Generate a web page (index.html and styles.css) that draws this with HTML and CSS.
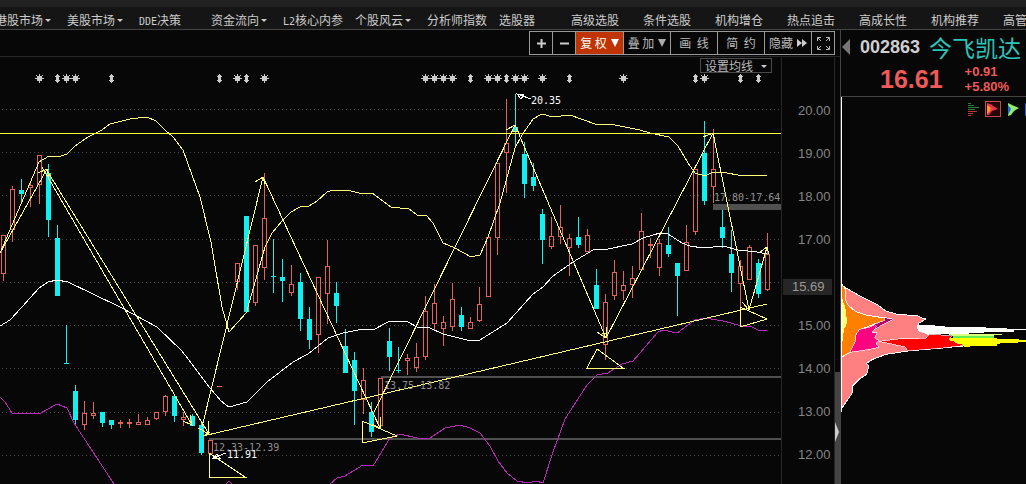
FILE: index.html
```html
<!DOCTYPE html>
<html lang="zh-CN">
<head>
<meta charset="utf-8">
<title>今飞凯达 002863</title>
<link rel="stylesheet" href="styles.css">
</head>
<body>
<div class="page">
  <div class="strip"></div>
  <nav class="menu">
    <a href="#" class="drop">港股市场</a>
    <a href="#" class="drop">美股市场</a>
    <a href="#"><span class="latin">DDE</span>决策</a>
    <a href="#" class="drop">资金流向</a>
    <a href="#"><span class="latin">L2</span>核心内参</a>
    <a href="#" class="drop">个股风云</a>
    <a href="#">分析师指数</a>
    <a href="#">选股器</a>
    <a href="#">高级选股</a>
    <a href="#">条件选股</a>
    <a href="#">机构增仓</a>
    <a href="#">热点追击</a>
    <a href="#">高成长性</a>
    <a href="#">机构推荐</a>
    <a href="#">高管增持</a>
  </nav>
  <main class="main">
    <section class="left">
      <div class="toolbar">
        <button class="tool small" aria-label="放大"><svg width="9" height="9"><path d="M0 4.5H9M4.5 0V9" stroke="#ccc" stroke-width="2" fill="none"/></svg></button>
        <button class="tool small" aria-label="缩小"><svg width="9" height="9"><path d="M0 4.5H9" stroke="#ccc" stroke-width="2" fill="none"/></svg></button>
        <button class="tool active">复 权<svg width="8" height="8"><path d="M0 0H8L4 8Z" fill="#fff"/></svg></button>
        <button class="tool">叠 加<svg width="8" height="8"><path d="M0 0H8L4 8Z" fill="#aaa"/></svg></button>
        <button class="tool">画&nbsp; 线</button>
        <button class="tool">简&nbsp; 约</button>
        <button class="tool">隐藏<svg width="10" height="8"><path d="M0 0L5 4L0 8ZM5 0L10 4L5 8Z" fill="#ccc"/></svg></button>
        <button class="tool small last" aria-label="全屏"><svg width="13" height="13"><path d="M.5 4V.5H4M1 1L4 4M9 .5H12.5V4M12 1L9 4M.5 9V12.5H4M1 12L4 9M9 12.5H12.5V9M12 12L9 9" stroke="#bbb" fill="none"/></svg></button>
      </div>
      <div class="chart">
        <button class="average">设置均线<span class="caret"></span></button>
        <svg class="plot" viewBox="0 57 781 427" role="img" aria-label="K线图">
          <g id="grid"></g>
          <g class="gap">
            <rect x="209" y="438" width="572" height="2"/>
            <rect x="381" y="376" width="400" height="2"/>
            <rect x="713" y="204" width="68" height="6"/>
          </g>
          <g id="marks"></g>
          <g id="candles"></g>
          <polyline class="line yellow" points="0,253 39,162 49,156 58,157 67,154 75,146 88,137 102,130 110,124 130,119 147,117 156,121 165,130 173,137 183,150 200,197 211,242 222,307 229,332 247,312 248,307 265,247 272,233 282,221 291,212 300,207 309,206 317,201 327,192 333,190 347,190 363,194 372,193 391,207 400,208 408,208 417,215 426,215 433,223 443,243 455,248 471,257 480,255 488,237 500,203 515,148 522,135 533,119 542,114 553,117 570,115 595,124 610,124 640,130 650,133 669,137 678,146 688,163 695,173 705,176 713,172 727,173 738,175 757,175 767,176"/>
          <polyline class="line white" points="0,326 10,320 22,307 39,288 48,282 57,280 68,282 120,307 133,314 157,327 182,351 210,388 221,401 229,407 247,402 267,382 293,362 308,354 328,338 343,333 363,329 373,330 388,322 400,321 408,322 417,327 430,328 443,334 467,340 480,340 507,323 533,294 543,287 553,276 573,262 593,250 608,249 632,244 643,238 660,233 668,234 682,243 690,246 703,248 723,246 738,250 757,252 767,254"/>
          <polyline class="line magenta" points="0,397 5,402 12,413 32,413 39,414 57,404 67,408 74,423 114,484"/>
          <polyline class="line magenta" points="226,484 229,481 232,484"/>
          <polyline class="line magenta" points="330,484 337,478 345,476 363,465 373,466 390,438 400,434 417,438 430,438 445,428 460,425 470,428 480,433 490,446 498,461 507,473 517,481 528,483 536,481 543,483 553,452 565,419 587,385 597,375 608,373 622,364 633,361 658,332 663,330 677,333 695,320 705,318 723,321 742,326 750,326 758,330 767,331"/>
          <path class="line level" d="M0 133.5H781"/>
          <path class="line yellow" d="M0 253L47 169M42 167L192 425M46 169L209 434M202 427L263 177L380 428M374 412L515 125L606 338L713 133L749 310L767 247M203 436L767 304"/>
          <path class="line yellow" d="M38 173L47 169L49 178M183 421L192 425L190 415M198 428L209 434L208 421M203 436L210 432M255 182L263 177L265 184M372 424L380 428L380 417M506 130L515 125L518 131L511 131M597 332L606 338L607 327M602 333H607M703 137L713 133L715 141M742 302L749 310L752 299M760 252L767 247L769 254"/>
          <path class="line yellow" d="M209 453V477H245ZM362 421V443L397 436ZM597 349L587 368H623ZM740 307V327L767 319Z"/>
          <path class="line white" d="M517 94L531 99M517 94L524 95L521 99ZM213 458L226 453M213 458L217 454L220 458Z"/>
          <text class="price muted" x="213" y="451">12.33-12.39</text>
          <text class="price" x="227" y="458">11.91</text>
          <text class="price muted" x="384" y="389">13.75-13.82</text>
          <text class="price muted" x="714" y="201">17.80-17.64</text>
          <text class="price" x="531" y="104">20.35</text>
        </svg>
        <ul class="axis">
          <li>20.00</li><li>19.00</li><li>18.00</li><li>17.00</li>
          <li><span class="cursor">15.69</span></li>
          <li>15.00</li><li>14.00</li><li>13.00</li><li>12.00</li>
        </ul>
        <div class="rail"><div class="thumb"><svg width="4" height="20"><path d="M0 0L4 10L0 20Z" fill="#ccc"/></svg></div></div>
      </div>
    </section>
    <aside class="quote">
      <header class="head">
        <div class="title">
          <svg width="8" height="16"><path d="M8 0V16L0 8Z" fill="#777"/></svg>
          <span class="code">002863</span>
          <span class="name">今飞凯达</span>
        </div>
        <div class="values">
          <strong class="last-price">16.61</strong>
          <div class="change"><div>+0.91</div><div>+5.80%</div></div>
        </div>
      </header>
      <div class="chips">
        <div class="modes">
          <svg width="12" height="15"><path d="M1 1.5H4M1 3.5H7M1 5.5H12M1 7.5H8" stroke="#2f7a3c"/><path d="M1 9.5H10M1 11.5H6M1 13.5H4" stroke="#b8383e"/></svg>
          <svg width="16" height="16"><rect x=".5" y=".5" width="15" height="15" fill="#250508" stroke="#c24b4b"/><path d="M2 2L5 3L13 8L7 10L4 14H2Z" fill="#f03050"/><path d="M2 4L6 7L5 10L2 13Z" fill="#ff9a20"/></svg>
          <svg width="12" height="15"><path d="M1 1L5 3L12 6L7 9L4 13L1 14Z" fill="#8df060"/><path d="M1 3L4 7L1 13Z" fill="#2864e8"/></svg>
          <svg width="12" height="15"><path d="M0 1V14L8 7Z" fill="#2864e8"/></svg>
        </div>
        <svg class="distribution" viewBox="45 -489 555 1161" role="img" aria-label="筹码分布">
          <path d="M46 -489V455" stroke="#fff" stroke-width="3"/>
          <g stroke="#fff" stroke-width="3">
            <path fill="#ff8080" d="M47 55V75L60 84L100 107L155 135L180 153L210 162L275 168L285 173L300 177L278 190L274 200L278 212L310 224L305 235L410 258L245 273L180 283L140 298L122 310L128 318L122 343L100 357L80 378L78 400L47 445Z"/>
            <path fill="#ff8000" d="M47 72L57 85V115L65 135L90 155L120 165L195 177L145 192L100 210L90 225L88 245L75 277L60 283L47 292Z"/>
          </g>
          <path fill="#ffff80" d="M47 100L51 127L58 140L60 165L64 180L60 200L54 207L50 240L47 250Z"/>
          <path fill="#b0006a" stroke="#fff" stroke-width="2" d="M140 195L178 180L172 172L202 178L150 205Z"/>
          <path fill="#ff0080" stroke="#fff" stroke-width="2" d="M100 208L130 202L145 194L152 200L137 219L154 218L146 234L158 242L150 249L158 262L130 268L72 277L88 245L90 225Z"/>
          <path fill="#f00" stroke="#fff" stroke-width="2" d="M310 222L378 228L370 238L420 256L350 264L245 273L238 261L160 244L215 237L300 235Z"/>
          <path fill="#fff" d="M275 195H325L330 199L480 202V205L600 206V211H563V215H480L470 220L310 222L280 215L272 205Z"/>
          <path fill="#d8ff80" d="M365 221H527V225H505V228H380Z"/>
          <path fill="#60ee50" d="M382 227H503V235H382Z"/>
          <path fill="#ff0" d="M372 233L385 235H510L520 238H578L580 241H600V245H575V249H530L512 253V257H460L415 261L410 254L390 250L385 244L373 242Z"/>
        </svg>
      </div>
    </aside>
  </main>
</div>
<script src="chart.js"></script>
</body>
</html>
```
FILE: styles.css
```css
* { box-sizing: border-box; }
body {
  margin: 0;
  background: #070707;
  color: #c8c8c8;
  font: 12px/16px "Noto Sans CJK SC", sans-serif;
  overflow: hidden;
}
.page { display: flex; flex-direction: column; min-height: 100vh; }
.strip { height: 7px; background: #222; }
.menu {
  display: flex;
  height: 23px;
  padding-top: 5px;
  background: #151515;
  border-bottom: 1px solid #444;
  overflow: hidden;
}
.menu a {
  flex: 0 0 72px;
  color: #ccc;
  text-decoration: none;
  white-space: nowrap;
}
.menu a:first-child { margin-left: -5px; }
.latin { font: 10px/16px "DejaVu Sans Mono", monospace; }
.drop::after, .caret {
  content: "";
  display: inline-block;
  margin-left: 2px;
  border: 3px solid transparent;
  border-top-color: #ccc;
  border-bottom: 0;
  vertical-align: 3px;
}
.main { display: flex; flex: 1; }
.left { flex: 1; min-width: 0; display: flex; flex-direction: column; }
.toolbar {
  display: flex;
  justify-content: flex-end;
  height: 27px;
  padding: 1px 5px 0 0;
  border-bottom: 1px solid #262626;
}
.tool {
  display: flex;
  align-items: center;
  justify-content: center;
  gap: 4px;
  width: 47px;
  height: 24px;
  padding: 0;
  background: #070707;
  border: 1px solid #999;
  border-right: 0;
  color: #bbb;
  font: 12px/16px "Noto Sans CJK SC", sans-serif;
  white-space: nowrap;
}
.tool.small { width: 23px; }
.tool.active { width: 48px; background: #bf3400; color: #fff; }
.tool.last { width: 24px; border-right: 1px solid #999; }
.chart { position: relative; display: flex; flex: 1; }
.average {
  position: absolute;
  top: 1px;
  right: 68px;
  width: 72px;
  height: 15px;
  padding: 0;
  background: #070707;
  border: 1px solid #4a4a4a;
  color: #bbb;
  font: 12px/12px "Noto Sans CJK SC", sans-serif;
  white-space: nowrap;
}
.average .caret { margin-left: 8px; }
.plot { flex: 1; min-width: 0; align-self: flex-start; display: block; shape-rendering: crispEdges; }
.line { fill: none; stroke-width: 1; }
.yellow { stroke: #ffff78; }
.level { stroke: #ffff40; }
.white { stroke: #fff; }
.magenta { stroke: #b828b8; }
.gap { fill: #505050; }
.grid-line { stroke: #484848; stroke-dasharray: 1 3; }
.up { fill: none; stroke: #e06458; }
.up-wick { fill: #e06458; }
.down { fill: #10f0f0; }
.mark { fill: #ccc; }
.star { stroke: #ccc; fill: none; }
.price { fill: #fff; font: 10px "DejaVu Sans Mono", monospace; }
.muted { fill: #909090; }
.axis {
  width: 54px;
  margin: 0;
  padding: 32px 0 0;
  border-left: 1px solid #262626;
  border-right: 1px solid #262626;
  list-style: none;
  color: #858585;
  font: 13px/43px "Liberation Sans", Arial, sans-serif;
}
.axis li { height: 43px; padding-left: 16px; }
.axis li:nth-child(5) { padding: 18px 2px 0 1px; }
.cursor { display: block; padding-left: 9px; background: #262626; color: #999; line-height: 16px; }
.rail { width: 5px; display: flex; flex-direction: column; justify-content: flex-end; }
.thumb { height: 112px; padding-top: 50px; background: #444; }
.thumb svg { display: block; }
.quote { width: 186px; border-left: 1px solid #444; display: flex; flex-direction: column; }
.head { height: 67px; border-bottom: 1px solid #444; overflow: hidden; }
.title { display: flex; align-items: center; height: 33px; padding-left: 1px; white-space: nowrap; }
.code { margin-left: 10px; color: #d0d0d0; font: bold 18px/32px "Liberation Sans", Arial, sans-serif; }
.name { margin-left: 9px; color: #2cc4bc; font-size: 23px; line-height: 32px; }
.values {
  display: flex;
  align-items: center;
  gap: 22px;
  height: 32px;
  padding-left: 39px;
  color: #f05a58;
  font-family: "Liberation Sans", Arial, sans-serif;
}
.last-price { font-size: 25px; line-height: 32px; }
.change { font-size: 13px; font-weight: bold; line-height: 15px; }
.chips { position: relative; flex: 1; overflow: hidden; }
.modes { position: absolute; top: 4px; left: 126px; display: flex; align-items: center; gap: 6px; }
.modes svg { flex: none; }
.distribution { display: block; width: 100%; shape-rendering: crispEdges; }
```
FILE: chart.js
```js
const NS = "http://www.w3.org/2000/svg";
const PITCH = 8.985;
const columnX = (i) => Math.floor(3.6 + PITCH * i);

function add(parent, tag, attrs) {
  const el = document.createElementNS(NS, tag);
  for (const key in attrs) el.setAttribute(key, attrs[key]);
  parent.appendChild(el);
}

// column, direction, high, body top, body bottom, low
const candles = [
  [0,"u",235,235,273,281],[1,"u",186,189,229,242],[2,"d",179,190,194,203],[3,"u",183,185,187,207],
  [4,"u",155,155,184,204],[5,"d",164,173,220,237],[6,"d",225,238,296,296],[7,"d",325,363,364,364],
  [8,"d",385,391,420,426],[9,"u",401,413,424,430],[10,"u",402,413,415,419],[11,"d",412,412,423,427],
  [12,"d",420,420,425,429],[13,"u",420,422,423,428],[14,"u",419,422,423,428],[15,"u",414,422,424,425],
  [16,"u",417,420,424,425],[17,"u",412,412,418,420],[18,"u",395,396,411,416],[19,"d",396,396,416,422],
  [20,"u",412,417,419,426],[21,"d",414,416,426,426],[22,"d",422,425,453,455],[23,"u",440,440,453,453],
  [24,"u",386,386,386,386],[26,"u",263,263,281,290],[27,"d",216,216,312,312],[28,"u",245,245,302,306],
  [29,"u",173,218,267,280],[30,"d",239,276,277,293],[31,"d",259,277,281,302],[32,"u",265,284,292,296],
  [33,"d",273,282,319,331],[34,"d",307,319,340,349],[35,"u",277,277,334,353],[36,"u",240,266,293,324],
  [37,"d",282,293,306,323],[38,"d",329,346,373,373],[39,"d",352,360,391,425],[40,"u",368,380,399,414],
  [41,"d",402,412,432,437],[42,"u",378,378,425,426],[43,"d",328,341,357,371],[44,"d",347,370,371,373],
  [45,"u",354,358,360,375],[46,"u",343,357,367,372],[47,"u",296,311,356,360],[48,"u",284,303,323,331],
  [49,"u",316,322,328,346],[50,"u",283,299,326,331],[51,"d",307,315,327,331],[52,"u",317,322,328,328],
  [53,"u",287,304,320,322],[54,"u",237,237,296,296],[55,"u",163,163,237,255],[56,"u",99,143,152,193],
  [57,"d",94,127,131,146],[58,"d",142,154,184,198],[59,"d",163,177,186,191],[60,"d",209,214,240,264],
  [61,"u",217,236,246,249],[62,"u",205,227,236,244],[63,"u",234,238,247,276],[64,"d",217,237,245,248],
  [65,"u",229,235,251,251],[66,"d",269,285,309,309],[67,"u",294,302,344,360],[68,"u",260,272,295,300],
  [69,"u",271,285,290,300],[70,"u",266,278,284,298],[71,"u",213,231,269,270],[72,"u",238,244,245,258],
  [73,"u",239,243,267,276],[74,"d",227,245,254,257],[75,"d",263,263,276,316],[76,"u",225,242,270,270],
  [77,"u",169,169,231,235],[78,"d",121,153,201,205],[79,"u",129,169,186,203],[80,"d",210,227,238,248],
  [81,"d",230,254,273,292],[82,"u",260,266,283,310],[83,"u",245,247,279,280],[84,"d",259,263,294,298],
  [85,"u",233,254,289,291]
];

const candleLayer = document.getElementById("candles");
for (const [i, dir, high, top, bottom, low] of candles) {
  const x = columnX(i);
  if (dir === "u") {
    add(candleLayer, "rect", { class: "up-wick", x, y: high, width: 1, height: top - high });
    add(candleLayer, "rect", { class: "up-wick", x, y: bottom, width: 1, height: low - bottom });
    add(candleLayer, "rect", { class: "up", x: x - 1.5, y: top + 0.5, width: 4, height: bottom - top });
  } else {
    add(candleLayer, "rect", { class: "down", x, y: high, width: 1, height: low - high });
    add(candleLayer, "rect", { class: "down", x: x - 2, y: top, width: 5, height: bottom - top });
  }
}
add(candleLayer, "rect", { class: "up-wick", x: columnX(24) - 2, y: 386, width: 5, height: 1 });

const grid = document.getElementById("grid");
for (const y of [109, 152, 195, 239, 282, 325, 368, 412, 455]) {
  add(grid, "path", { class: "grid-line", d: `M2 ${y + 0.5}H781` });
}

const marks = document.getElementById("marks");
const stars = [4, 7, 8, 26, 29, 47, 48, 49, 50, 54, 55, 57, 58, 60, 69, 78];
const arrows = [6, 12, 24, 27, 52, 56, 63, 77, 82, 84];
for (const i of stars) {
  const x = columnX(i) + 0.5;
  add(marks, "path", { class: "star", d: `M${x} 74V83M${x - 4.5} 78.5H${x + 4.5}M${x - 3} 75.5L${x + 3} 81.5M${x + 3} 75.5L${x - 3} 81.5` });
  add(marks, "rect", { class: "mark", x: x - 2.5, y: 76, width: 5, height: 5 });
}
for (const i of arrows) {
  const x = columnX(i) + 0.5;
  add(marks, "path", { class: "mark", d: `M${x} 73.5L${x + 3} 77H${x + 1.5}V80H${x + 3}L${x} 83.5L${x - 3} 80H${x - 1.5}V77H${x - 3}Z` });
}
```
